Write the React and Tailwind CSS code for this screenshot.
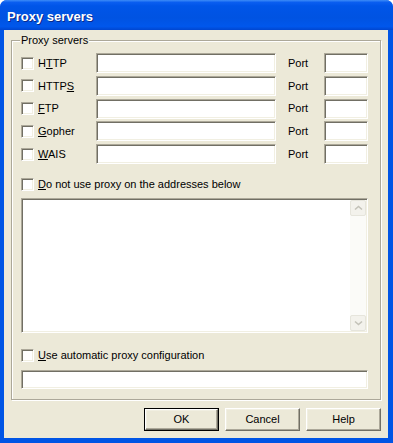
import React from 'react';

const sunken =
  'border border-t-[#aca899] border-l-[#aca899] border-b-white border-r-white bg-white shadow-[inset_1px_1px_0_#716f64,inset_-1px_-1px_0_#f1efe2]';

const raised =
  'border border-t-white border-l-white border-b-[#716f64] border-r-[#716f64] shadow-[inset_-1px_-1px_0_#aca899,inset_1px_1px_0_#f1efe2]';

function Check() {
  return <div className={`w-[13px] h-[13px] shrink-0 ${sunken}`} />;
}

function Label({ text, hot }) {
  const i = text.indexOf(hot);
  return (
    <span>
      {text.slice(0, i)}
      <u className="underline-offset-[1px]">{hot}</u>
      {text.slice(i + 1)}
    </span>
  );
}

const servers = [
  { text: 'HTTP', hot: 'T' },
  { text: 'HTTPS', hot: 'S' },
  { text: 'FTP', hot: 'F' },
  { text: 'Gopher', hot: 'G' },
  { text: 'WAIS', hot: 'W' },
];

function Chevron({ down }) {
  return (
    <svg width="9" height="6" viewBox="0 0 9 6">
      <path
        d={down ? 'M1 1.5l3.5 3 3.5-3' : 'M1 4.5l3.5-3 3.5 3'}
        fill="none"
        stroke="#c3c2b8"
        strokeWidth="1.6"
      />
    </svg>
  );
}

function Button({ label, isDefault }) {
  return (
    <div className={`w-[75px] h-[23px] flex ${isDefault ? 'border border-black' : ''}`}>
      <div className={`flex-1 flex items-center justify-center ${raised}`}>{label}</div>
    </div>
  );
}

export default function App() {
  return (
    <div className="w-[393px] h-[443px] flex flex-col rounded-t-[7px] bg-[#0055e5] font-[Liberation_Sans,Arial,sans-serif] text-[11px] text-black overflow-hidden">
      <div className="h-[30px] shrink-0 flex items-center pl-[7px] pt-[3px] bg-[linear-gradient(#3d8cf7_0%,#0a5ef0_8%,#0055e8_20%,#0053e2_60%,#0057ec_88%,#0046d0_100%)]">
        <span className="text-white font-bold text-[13px] [text-shadow:1px_1px_0_#0a2a8a]">
          Proxy servers
        </span>
      </div>

      <div className="flex-1 flex flex-col ml-[4px] mr-[5px] mb-[5px] bg-[#ece9d8] px-[7px] pt-[10px] pb-[6px]">
        <div className="relative border border-[#aca899] shadow-[1px_1px_0_#fff,inset_1px_1px_0_#fff] pl-[9px] pr-[12px] pt-[12px] pb-[10px] flex flex-col">
          <span className="absolute left-[8px] top-[-7px] bg-[#ece9d8] px-[1px] leading-[13px]">
            Proxy servers
          </span>

          <div className="flex flex-col gap-[2.75px]">
            {servers.map((s) => (
              <div key={s.text} className="flex items-center h-[20px]">
                <Check />
                <span className="w-[62px] pl-[4px] shrink-0">
                  <Label text={s.text} hot={s.hot} />
                </span>
                <div className={`w-[180px] h-[20px] ${sunken}`} />
                <span className="ml-[12px] w-[36px]">Port</span>
                <div className={`w-[44px] h-[20px] ${sunken}`} />
              </div>
            ))}
          </div>

          <div className="flex items-center gap-[4px] mt-[14px] h-[13px]">
            <Check />
            <Label text="Do not use proxy on the addresses below" hot="D" />
          </div>

          <div className={`mt-[7px] h-[135px] flex justify-end p-[1px] ${sunken}`}>
            <div className="w-[16px] flex flex-col bg-[#fbfbf8]">
              <div className="h-[16px] flex items-center justify-center rounded-[2px] border border-[#e6e5dc] bg-[#f3f2ec]">
                <Chevron />
              </div>
              <div className="flex-1" />
              <div className="h-[16px] flex items-center justify-center rounded-[2px] border border-[#e6e5dc] bg-[#f3f2ec]">
                <Chevron down />
              </div>
            </div>
          </div>

          <div className="flex items-center gap-[4px] mt-[16px] h-[13px]">
            <Check />
            <Label text="Use automatic proxy configuration" hot="U" />
          </div>

          <div className={`mt-[8px] h-[19px] ${sunken}`} />
        </div>

        <div className="flex justify-end gap-[6px] mt-[8px]">
          <Button label="OK" isDefault />
          <Button label="Cancel" />
          <Button label="Help" />
        </div>
      </div>
    </div>
  );
}
